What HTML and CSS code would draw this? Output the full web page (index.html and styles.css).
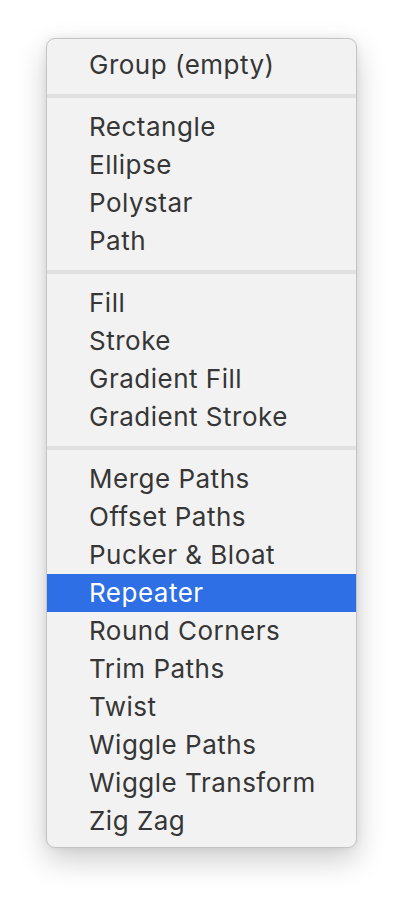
FILE: index.html
```html
<!DOCTYPE html>
<html>
<head>
<meta charset="utf-8">
<link rel="stylesheet" href="styles.css">
</head>
<body>
<div class="menu">
  <div class="item">Group (empty)</div>
  <div class="sep"></div>
  <div class="item">Rectangle</div>
  <div class="item">Ellipse</div>
  <div class="item">Polystar</div>
  <div class="item">Path</div>
  <div class="sep"></div>
  <div class="item">Fill</div>
  <div class="item">Stroke</div>
  <div class="item">Gradient Fill</div>
  <div class="item">Gradient Stroke</div>
  <div class="sep"></div>
  <div class="item">Merge Paths</div>
  <div class="item">Offset Paths</div>
  <div class="item">Pucker &amp; Bloat</div>
  <div class="item active">Repeater</div>
  <div class="item">Round Corners</div>
  <div class="item">Trim Paths</div>
  <div class="item">Twist</div>
  <div class="item">Wiggle Paths</div>
  <div class="item">Wiggle Transform</div>
  <div class="item">Zig Zag</div>
</div>
</body>
</html>
```
FILE: styles.css
```css
html, body {
  margin: 0;
  padding: 0;
  background: #ffffff;
}
body {
  padding: 38px 0 40px 46px;
  font-family: Inter, "Noto Sans", sans-serif;
}
.menu {
  width: 309px;
  background: #f2f2f2;
  border: 1px solid #c4c4c4;
  border-radius: 9px;
  padding: 7px 0;
  box-shadow: 0 12px 30px rgba(0, 0, 0, 0.2), 0 0 8px rgba(0, 0, 0, 0.07);
  overflow: hidden;
}
.item {
  height: 38px;
  line-height: 38px;
  padding-left: 42px;
  font-size: 26px;
  letter-spacing: 0.5px;
  color: #363636;
  white-space: nowrap;
}
.item.active {
  background: #2e6fe6;
  color: #ffffff;
}
.sep {
  height: 4px;
  margin: 10px 0;
  background: #e0e0e0;
}
```
